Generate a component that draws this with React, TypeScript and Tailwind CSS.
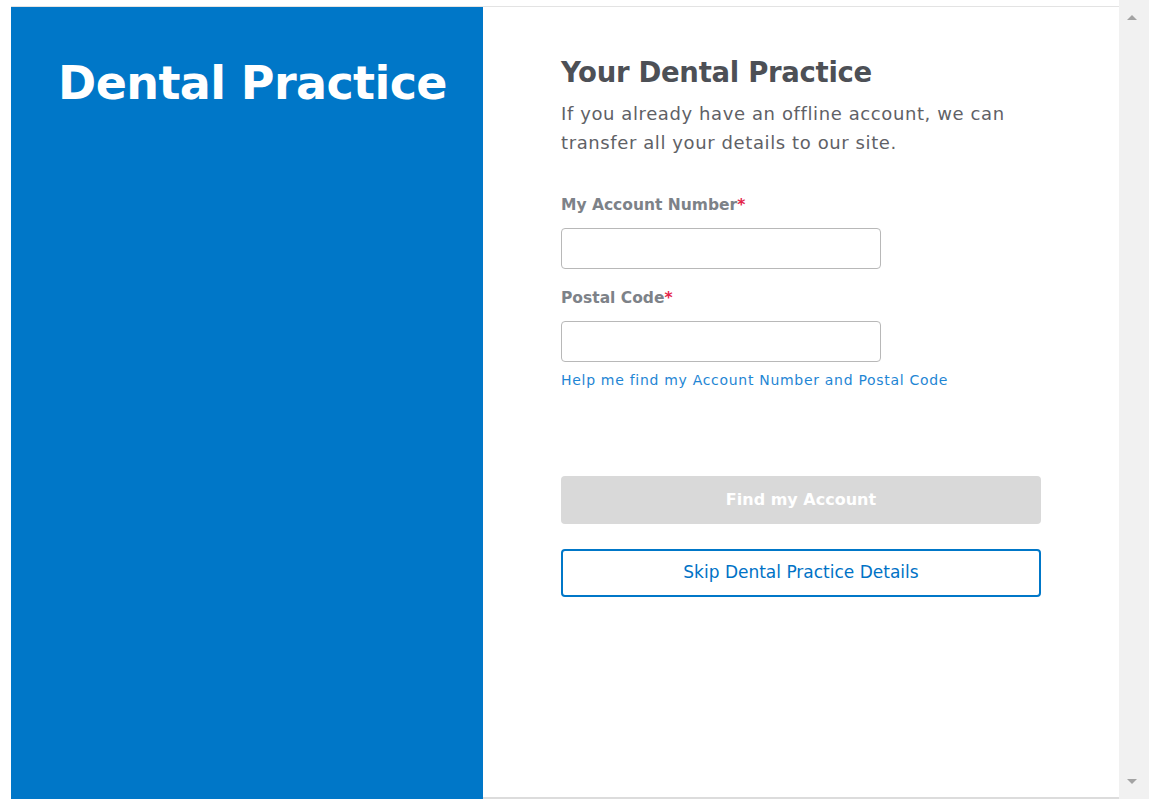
export default function App() {
  const font = { fontFamily: '"DejaVu Sans", "Open Sans", sans-serif' };
  return (
    <div className="flex h-[799px] w-[1149px] overflow-hidden bg-white" style={font}>
      <div className="flex flex-1 flex-col pl-[11px] pt-[6px]">
        <div className="flex flex-1 border-t border-[#e3e3e3]">
          <aside className="w-[472px] shrink-0 bg-[#0077c8] pl-[11px] pt-[46px]">
            <h1 className="text-center text-[46px] font-bold leading-[60px] text-white tracking-[-0.6px]">Dental Practice</h1>
          </aside>
          <main className="flex flex-1 flex-col border-b-2 border-[#dcdcdc] pl-[78px] pt-[47px]">
            <h2 className="text-[27.5px] font-bold leading-[36px] text-[#4d5056] tracking-[-0.3px]">Your Dental Practice</h2>
            <p className="mt-[9px] w-[480px] text-[18px] leading-[29px] text-[#5f6166] tracking-[0.6px]">
              If you already have an offline account, we can transfer all your details to our site.
            </p>
            <label className="mt-[38px] text-[15.5px] font-bold leading-[20px] text-[#7d8288]">
              My Account Number<span className="text-[#e4254a]">*</span>
            </label>
            <input className="mt-[13px] h-[41px] w-[320px] rounded-[4px] border border-[#b8b8b8] bg-white" />
            <label className="mt-[19px] text-[15.5px] font-bold leading-[20px] text-[#7d8288]">
              Postal Code<span className="text-[#e4254a]">*</span>
            </label>
            <input className="mt-[13px] h-[41px] w-[320px] rounded-[4px] border border-[#b8b8b8] bg-white" />
            <a className="mt-[8px] text-[14px] leading-[20px] text-[#1f86d4] tracking-[0.7px]">
              Help me find my Account Number and Postal Code
            </a>
            <button className="mt-[86px] h-[48px] w-[480px] rounded-[4px] bg-[#d9d9d9] text-[16px] font-semibold text-white">
              Find my Account
            </button>
            <button className="mt-[25px] h-[48px] w-[480px] rounded-[4px] border-2 border-[#0077c8] bg-white text-[17px] text-[#0072c6]">
              Skip Dental Practice Details
            </button>
          </main>
        </div>
      </div>
      <div className="flex w-[30px] shrink-0 flex-col items-center justify-between bg-[#f1f1f1] py-[15px] pr-[4px]">
        <div className="h-0 w-0 border-x-[5px] border-b-[5px] border-x-transparent border-b-[#a3a3a3]" />
        <div className="h-0 w-0 border-x-[5px] border-t-[5px] border-x-transparent border-t-[#a3a3a3]" />
      </div>
    </div>
  );
}
